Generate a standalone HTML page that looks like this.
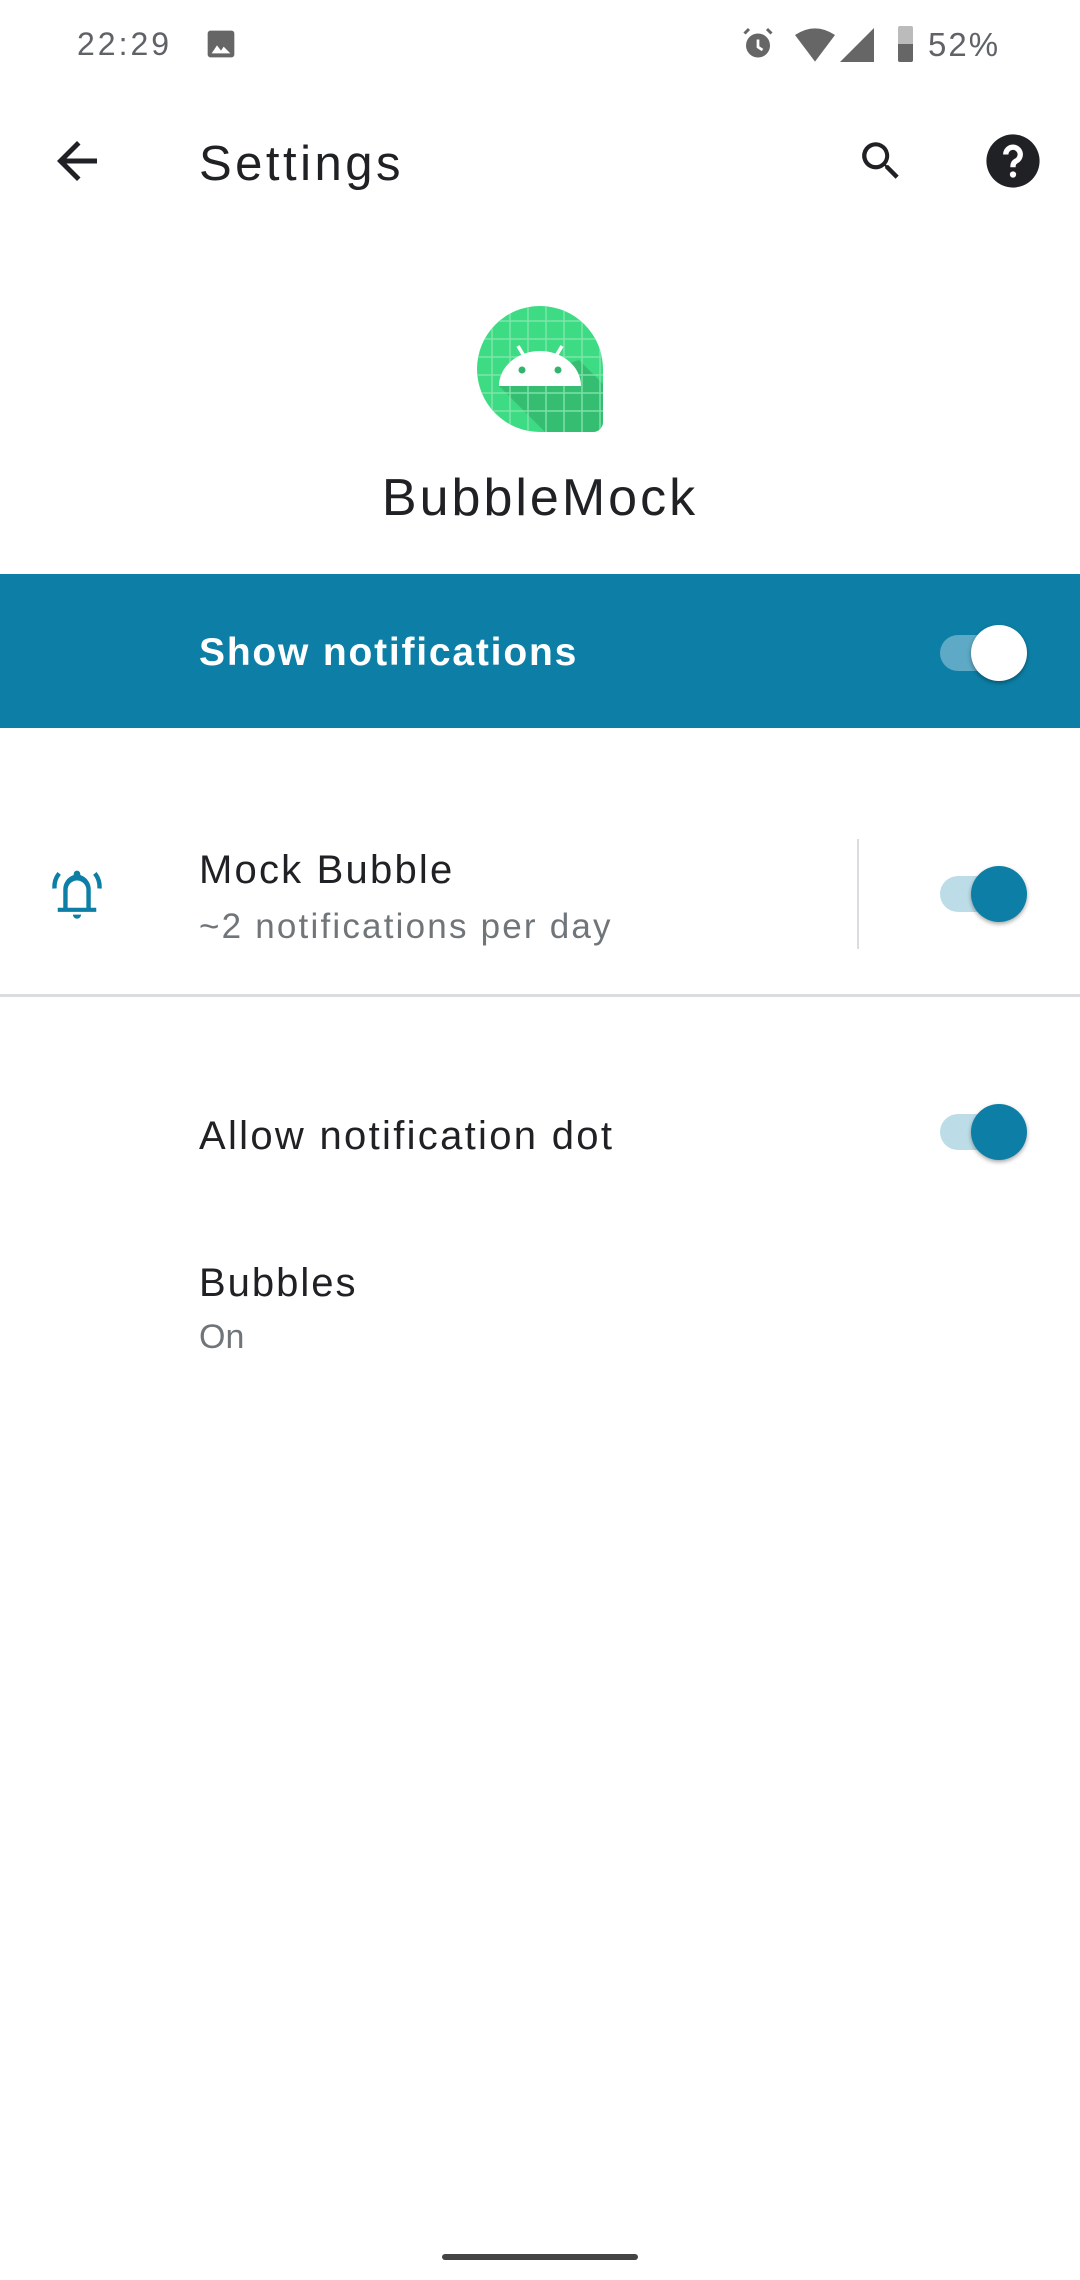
<!DOCTYPE html>
<html><head><meta charset="utf-8"><style>
*{margin:0;padding:0;box-sizing:border-box}
body{width:1080px;height:2280px;background:#fff;position:relative;overflow:hidden;font-family:"Liberation Sans",sans-serif;color:#202124}
.a{position:absolute}
.t{position:absolute;white-space:nowrap;line-height:1}
.track{position:absolute;width:84px;height:36px;border-radius:18px}
.thumb{position:absolute;width:56px;height:56px;border-radius:50%;box-shadow:0 2px 4px rgba(0,0,0,.35)}
</style></head><body>
<div class="t" style="left:77px;top:28px;font-size:32px;letter-spacing:3px;color:#5f6368">22:29</div>
<svg class="a" style="left:205px;top:28px" width="32" height="32" viewBox="0 0 24 24"><rect x="2" y="2" width="20" height="20" rx="2" fill="#666"/><path d="M5 19l4-6 3 4 2-3 5 5z" fill="#fff"/></svg>
<svg class="a" style="left:740px;top:26px" width="36" height="36" viewBox="0 0 24 24"><circle cx="12" cy="13" r="8" fill="#666"/><path d="M12 9v5l3 2" stroke="#fff" stroke-width="1.8" fill="none"/><path d="M3 5l3-3M21 5l-3-3" stroke="#666" stroke-width="2"/></svg>
<svg class="a" style="left:795px;top:28px" width="40" height="34" viewBox="0 0 24 20"><path d="M0 4Q12-4 24 4L12 20z" fill="#666"/></svg>
<svg class="a" style="left:840px;top:28px" width="34" height="34" viewBox="0 0 24 24"><path d="M24 0V24H0z" fill="#666"/></svg>
<div class="a" style="left:898px;top:26px;width:15px;height:36px;background:#bbb;border-radius:2px"></div>
<div class="a" style="left:898px;top:44px;width:15px;height:18px;background:#666;border-radius:0 0 2px 2px"></div>
<div class="t" style="left:928px;top:28px;font-size:33px;letter-spacing:2px;color:#5f6368">52%</div>

<svg class="a" style="left:47px;top:131px" width="60" height="60" viewBox="0 0 24 24"><path d="M20 11H7.8l5.6-5.6L12 4l-8 8 8 8 1.4-1.4L7.8 13H20z" fill="#202124"/></svg>
<div class="t" style="left:199px;top:140px;font-size:49px;letter-spacing:3.5px;color:#202124">Settings</div>
<svg class="a" style="left:856px;top:136px" width="50" height="50" viewBox="0 0 24 24"><path d="M15.5 14h-.8l-.3-.3A6.5 6.5 0 1 0 9.5 16a6.5 6.5 0 0 0 4.2-1.6l.3.3v.8l5 5 1.5-1.5zm-6 0a4.5 4.5 0 1 1 0-9 4.5 4.5 0 0 1 0 9z" fill="#202124"/></svg>
<svg class="a" style="left:984px;top:132px" width="58" height="58" viewBox="0 0 24 24"><circle cx="12" cy="12" r="11" fill="#202124"/><path d="M9 9.3a3 3 0 1 1 4.3 2.7c-.9.5-1.3 1-1.3 2v.6" stroke="#fff" stroke-width="2.2" fill="none"/><circle cx="12" cy="17.6" r="1.3" fill="#fff"/></svg>

<svg class="a" style="left:475px;top:304px" width="130" height="130" viewBox="0 0 130 130">
<defs><clipPath id="c"><path d="M65 2a63 63 0 0 0 0 126H118a10 10 0 0 0 10-10V65A63 63 0 0 0 65 2z"/></clipPath></defs>
<g clip-path="url(#c)"><rect width="130" height="130" fill="#3ddc84"/>
<path d="M24 82L72 130H130V82L104 56z" fill="#2fa564" opacity=".55"/>
<g stroke="#8eeab5" stroke-width="1.5" opacity=".8">
<path d="M17 0V130M35 0V130M53 0V130M71 0V130M89 0V130M107 0V130M125 0V130M0 17H130M0 35H130M0 53H130M0 71H130M0 89H130M0 107H130"/></g></g>
<path d="M24 82a41 35 0 0 1 82 0z" fill="#fff"/>
<path d="M43 42l9 15M87 42l-9 15" stroke="#fff" stroke-width="3.5"/>
<circle cx="47" cy="66" r="3.5" fill="#33b36d"/><circle cx="83" cy="66" r="3.5" fill="#33b36d"/>
</svg>
<div class="t" style="left:0;width:1080px;text-align:center;top:472px;font-size:52px;letter-spacing:3px;color:#202124">BubbleMock</div>

<div class="a" style="left:0;top:574px;width:1080px;height:154px;background:#0d7fa6"></div>
<div class="t" style="left:199px;top:633px;font-size:39px;letter-spacing:1.8px;font-weight:bold;color:#fff">Show notifications</div>
<div class="track" style="left:940px;top:635px;background:#5ea9c5"></div>
<div class="thumb" style="left:971px;top:625px;background:#fff"></div>

<svg class="a" style="left:44px;top:860px" width="66" height="68" viewBox="0 0 24 24"><path d="M12 3.5a1.2 1.2 0 0 0-1.2 1.2v.4A5.5 5.5 0 0 0 7 10.5V17H5v1.5h14V17h-2v-6.5a5.5 5.5 0 0 0-3.8-5.4v-.4A1.2 1.2 0 0 0 12 3.5zM8.6 17v-6.5a3.4 3.4 0 0 1 6.8 0V17z" fill="#0d7fa6"/><path d="M10.5 19.5h3a1.5 1.5 0 0 1-3 0z" fill="#0d7fa6"/><path d="M5.5 4.5A8 8 0 0 0 3.8 10M18.5 4.5A8 8 0 0 1 20.2 10" stroke="#0d7fa6" stroke-width="1.6" fill="none"/></svg>
<div class="t" style="left:199px;top:850px;font-size:40px;letter-spacing:2.2px;color:#202124">Mock Bubble</div>
<div class="t" style="left:199px;top:909px;font-size:35px;letter-spacing:2.2px;color:#70757a">~2 notifications per day</div>
<div class="a" style="left:857px;top:839px;width:2px;height:110px;background:#dadce0"></div>
<div class="track" style="left:940px;top:876px;background:#bcdde8"></div>
<div class="thumb" style="left:971px;top:866px;background:#0d7fa6"></div>
<div class="a" style="left:0;top:994px;width:1080px;height:3px;background:#dadce0"></div>

<div class="t" style="left:199px;top:1116px;font-size:40px;letter-spacing:2.3px;color:#202124">Allow notification dot</div>
<div class="track" style="left:940px;top:1114px;background:#bcdde8"></div>
<div class="thumb" style="left:971px;top:1104px;background:#0d7fa6"></div>

<div class="t" style="left:199px;top:1263px;font-size:40px;letter-spacing:2px;color:#202124">Bubbles</div>
<div class="t" style="left:199px;top:1320px;font-size:34px;color:#70757a">On</div>

<div class="a" style="left:442px;top:2254px;width:196px;height:6px;border-radius:3px;background:#444"></div>
</body></html>
